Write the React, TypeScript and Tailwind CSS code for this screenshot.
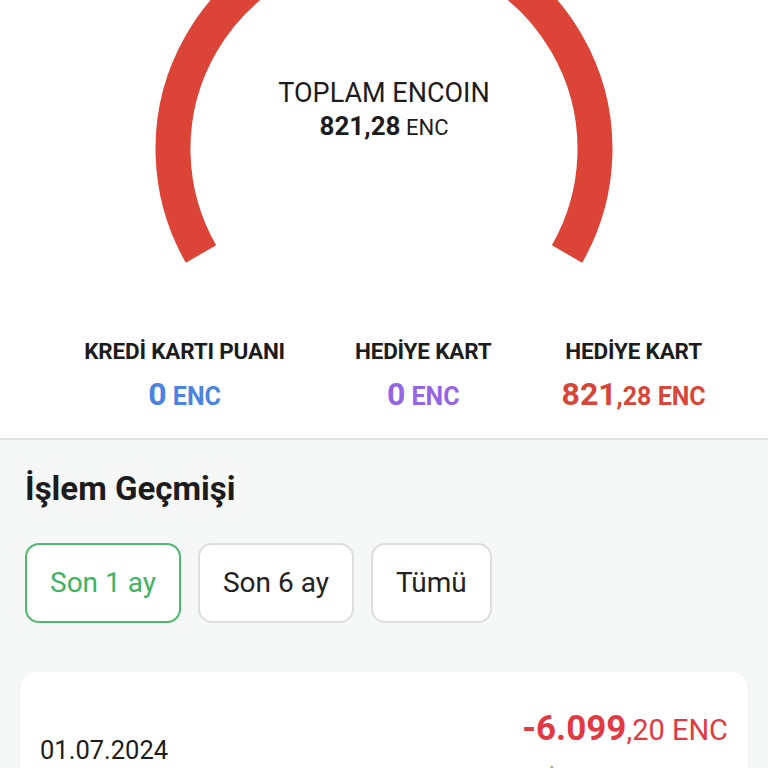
import React from "react";

const stats = [
  { label: "KREDİ KARTI PUANI", whole: "0", frac: "", color: "text-[#4a84e0]" },
  { label: "HEDİYE KART", whole: "0", frac: "", color: "text-[#9466e6]" },
  { label: "HEDİYE KART", whole: "821", frac: ",28", color: "text-[#d8463a]" },
];

const filters = ["Son 1 ay", "Son 6 ay", "Tümü"];

export default function App() {
  return (
    <div className="w-[768px] h-[768px] overflow-hidden bg-[#f6f8f7] font-['Roboto',sans-serif] text-[#1c1c1c]">
      <div className="bg-white border-b-2 border-[#e0e2e1]">
        {/* Gauge */}
        <div className="relative h-[337px]">
          <svg className="absolute inset-0" width="768" height="337" viewBox="0 0 768 337">
            <path
              d="M 201 254 A 211 211 0 1 1 567 254"
              fill="none"
              stroke="#dc4437"
              strokeWidth={35}
            />
          </svg>
          <div className="relative flex flex-col items-center pt-[76px]">
            <span className="text-[27px] leading-[34px]">TOPLAM ENCOIN</span>
            <span className="text-[22px] leading-[32px]">
              <span className="font-bold text-[26px]">821,28</span> ENC
            </span>
          </div>
        </div>

        {/* Stats */}
        <div className="flex justify-center gap-[70px] pb-[18px] pl-[22px]">
          {stats.map((s, i) => (
            <div key={i} className="flex flex-col items-center">
              <span className="font-bold text-[22.5px] leading-[28px] tracking-[-0.2px]">{s.label}</span>
              <span className={`font-bold mt-[9px] leading-[40px] ${s.color}`}>
                <span className="text-[32px]">{s.whole}</span>
                <span className="text-[25px]">{s.frac} ENC</span>
              </span>
            </div>
          ))}
        </div>
      </div>

      {/* Transaction history */}
      <div className="px-[25px] pt-[27px]">
        <h2 className="font-bold text-[33px] leading-[44px]">İşlem Geçmişi</h2>
        <div className="flex gap-[17px] mt-[32px]">
          {filters.map((f, i) => (
            <button
              key={f}
              className={
                i === 0
                  ? "h-[80px] px-[23px] rounded-[14px] border-2 border-[#4cba6a] bg-white text-[#3fb35e] text-[28px]"
                  : "h-[80px] px-[23px] rounded-[14px] border-2 border-[#dedede] bg-white text-[#222] text-[28px]"
              }
            >
              {f}
            </button>
          ))}
        </div>
      </div>

      <div className="mx-[20px] mt-[49px] bg-white rounded-[16px] shadow-[0_1px_4px_rgba(0,0,0,0.06)] px-[20px] pt-[34px]">
        <div className="flex justify-between">
          <span className="text-[25.5px] leading-[32px] mt-[28px]">01.07.2024</span>
          <div className="flex flex-col items-end">
            <span className="text-[#e13a43] text-[29px] leading-[46px]">
              <span className="font-bold text-[35px]">-6.099</span>,20 ENC
            </span>
            <span className="text-[#9a9a9a] text-[22px] leading-[28px] mt-[11px] pr-[62px]">İşlem iadesi</span>
          </div>
        </div>
      </div>
    </div>
  );
}
